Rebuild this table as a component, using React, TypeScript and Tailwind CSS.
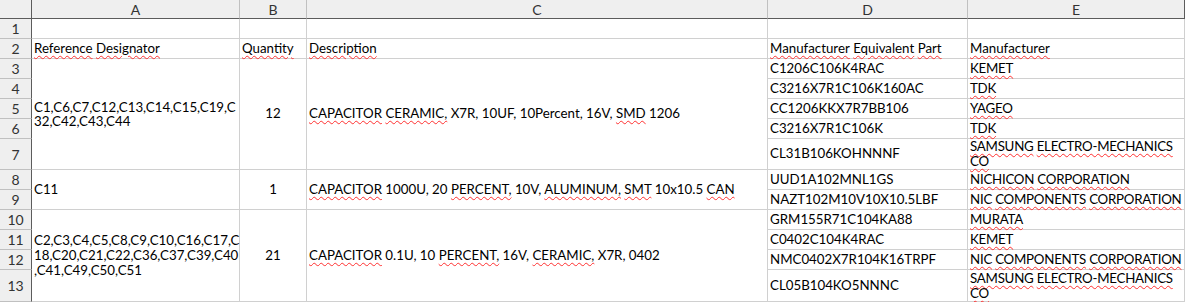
import React from "react";

const U = ({ children }: { children: React.ReactNode }) => (
  <span className="underline decoration-wavy decoration-[#ff3030] decoration-1 underline-offset-[2px]">
    {children}
  </span>
);

const hdr =
  "bg-[#efefef] border-r border-b border-[#c0c0c0] flex items-center justify-center text-[#333] text-[14px]";
const rowHdr =
  "bg-[#efefef] border-r border-r-[#5c5c5c] border-b border-b-[#c0c0c0] flex items-center justify-center text-[#333] text-[14px]";
const cell =
  "border-r border-b border-[#d0d0d0] flex items-center px-[2px] text-[13.3px] text-black whitespace-nowrap overflow-visible";

type PartRow = { part: string; mfr: React.ReactNode };

const Samsung = () => (
  <span className="leading-[15px] whitespace-nowrap">
    <U>SAMSUNG</U> <U>ELECTRO-MECHANICS</U>
    <br />
    <U>CO</U>
  </span>
);

const Nic = () => (
  <>
    <U>NIC</U>&nbsp;<U>COMPONENTS</U>&nbsp;<U>CORPORATION</U>
  </>
);

export default function App() {
  const rowsA: PartRow[] = [
    { part: "C1206C106K4RAC", mfr: <U>KEMET</U> },
    { part: "C3216X7R1C106K160AC", mfr: <U>TDK</U> },
    { part: "CC1206KKX7R7BB106", mfr: <U>YAGEO</U> },
    { part: "C3216X7R1C106K", mfr: <U>TDK</U> },
    { part: "CL31B106KOHNNNF", mfr: <Samsung /> },
  ];
  const rowsB: PartRow[] = [
    {
      part: "UUD1A102MNL1GS",
      mfr: (
        <>
          <U>NICHICON</U>&nbsp;<U>CORPORATION</U>
        </>
      ),
    },
    { part: "NAZT102M10V10X10.5LBF", mfr: <Nic /> },
  ];
  const rowsC: PartRow[] = [
    { part: "GRM155R71C104KA88", mfr: <U>MURATA</U> },
    { part: "C0402C104K4RAC", mfr: <U>KEMET</U> },
    { part: "NMC0402X7R104K16TRPF", mfr: <Nic /> },
    { part: "CL05B104KO5NNNC", mfr: <Samsung /> },
  ];

  const partCells = (rows: PartRow[], start: number) =>
    rows.map((r, i) => (
      <React.Fragment key={start + i}>
        {i > 0 && <div className={rowHdr}>{start + i}</div>}
        <div className={cell}>{r.part}</div>
        <div className={cell + " tracking-[-0.25px]"}>{r.mfr}</div>
      </React.Fragment>
    ));

  return (
    <div
      className="w-[1186px] h-[302px] overflow-hidden bg-white"
      style={{ fontFamily: "Lato, 'Noto Sans', sans-serif" }}
    >
      <div className="grid w-[1185px] grid-cols-[32px_208px_67px_461px_200px_217px] grid-rows-[19px_20px_20px_20px_20px_20px_20px_31px_20px_20px_20px_20px_20px_32px]">
        {/* header */}
        <div className="bg-[#efefef] border-r border-b border-[#5c5c5c]" />
        <div className={hdr + " border-b-[#5c5c5c]"}>A</div>
        <div className={hdr + " border-b-[#5c5c5c]"}>B</div>
        <div className={hdr + " border-b-[#5c5c5c]"}>C</div>
        <div className={hdr + " border-b-[#5c5c5c]"}>D</div>
        <div className={hdr + " border-b-[#5c5c5c] border-r-[#5c5c5c]"}>E</div>

        {/* row 1 */}
        <div className={rowHdr}>1</div>
        <div className={cell} />
        <div className={cell} />
        <div className={cell} />
        <div className={cell} />
        <div className={cell} />

        {/* row 2 */}
        <div className={rowHdr}>2</div>
        <div className={cell}>
          <U>Reference</U>&nbsp;<U>Designator</U>
        </div>
        <div className={cell}>
          <U>Quantity</U>
        </div>
        <div className={cell}>
          <U>Description</U>
        </div>
        <div className={cell}>
          <U>Manufacturer</U>&nbsp;<U>Equivalent</U>&nbsp;<U>Part</U>
        </div>
        <div className={cell}>
          <U>Manufacturer</U>
        </div>

        {/* group 1: rows 3-7 */}
        <div className={rowHdr}>3</div>
        <div className={cell + " row-span-5 leading-[14px]"}>
          <span>
            C1,C6,C7,C12,C13,C14,C15,C19,C
            <br />
            32,C42,C43,C44
          </span>
        </div>
        <div className={cell + " row-span-5 justify-center"}>12</div>
        <div className={cell + " row-span-5"}>
          <span>
            <U>CAPACITOR</U> <U>CERAMIC,</U> X7R, 10UF, 10Percent, 16V, <U>SMD</U> 1206
          </span>
        </div>
        {partCells(rowsA, 3)}

        {/* group 2: rows 8-9 */}
        <div className={rowHdr}>8</div>
        <div className={cell + " row-span-2"}>C11</div>
        <div className={cell + " row-span-2 justify-center"}>1</div>
        <div className={cell + " row-span-2"}>
          <span>
            <U>CAPACITOR</U> 1000U, 20 <U>PERCENT,</U> 10V, <U>ALUMINUM,</U> <U>SMT</U> 10x10.5{" "}
            <U>CAN</U>
          </span>
        </div>
        {partCells(rowsB, 8)}

        {/* group 3: rows 10-13 */}
        <div className={rowHdr}>10</div>
        <div className={cell + " row-span-4 leading-[15px]"}>
          <span>
            C2,C3,C4,C5,C8,C9,C10,C16,C17,C
            <br />
            18,C20,C21,C22,C36,C37,C39,C40
            <br />
            ,C41,C49,C50,C51
          </span>
        </div>
        <div className={cell + " row-span-4 justify-center"}>21</div>
        <div className={cell + " row-span-4"}>
          <span>
            <U>CAPACITOR</U> 0.1U, 10 <U>PERCENT,</U> 16V, <U>CERAMIC,</U> X7R, 0402
          </span>
        </div>
        {partCells(rowsC, 10)}
      </div>
    </div>
  );
}
